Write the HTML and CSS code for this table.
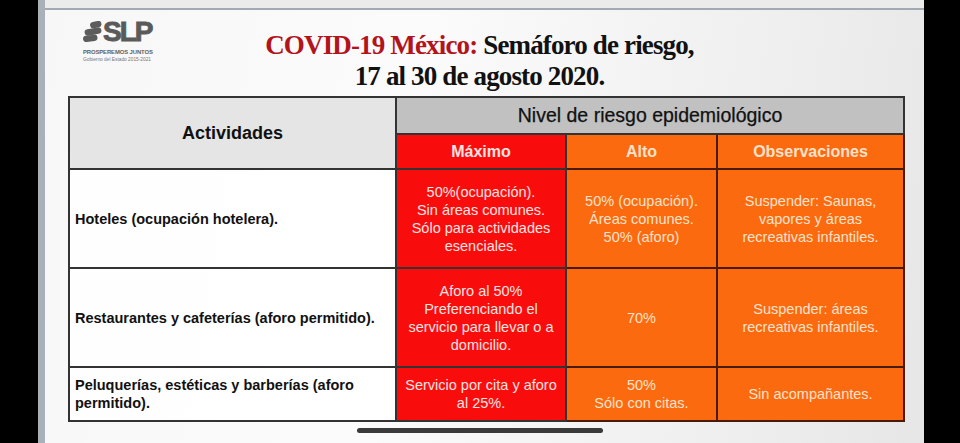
FILE: index.html
```html
<!DOCTYPE html>
<html lang="es">
<head>
<meta charset="utf-8">
<title>Semáforo de riesgo</title>
<link rel="stylesheet" href="styles.css">
</head>
<body>
<div class="screen">
  <div class="bezel"></div>
  <div class="frame">
    <div class="topstrip"></div>
    <div class="slide">
      <header class="head">
        <div class="logo">
          <div class="logo-mark">
            <svg class="pills" width="19" height="21" viewBox="0 0 19 21">
              <g fill="#5c5c5c">
                <rect x="7" y="0.5" width="11.5" height="6.3" rx="3.15" transform="rotate(-12 12.5 3.6)"/>
                <rect x="1.5" y="7.3" width="17" height="6.5" rx="3.25" transform="rotate(-10 10 10.5)"/>
                <rect x="0" y="14.2" width="14.5" height="6.3" rx="3.15" transform="rotate(-8 7.2 17.3)"/>
              </g>
            </svg>
            <span class="slp">SLP</span>
          </div>
          <div class="logo-line1">PROSPEREMOS JUNTOS</div>
          <div class="logo-line2">Gobierno del Estado 2015-2021</div>
        </div>
        <h1 class="title"><span class="red">COVID-19 México:</span> Semáforo de riesgo,<br>17 al 30 de agosto 2020.</h1>
        <div class="spacer"></div>
      </header>
      <table class="risk">
        <colgroup>
          <col class="c-act"><col class="c-max"><col class="c-alto"><col class="c-obs">
        </colgroup>
        <thead>
          <tr class="h1">
            <th rowspan="2" class="act-h">Actividades</th>
            <th colspan="3" class="nivel">Nivel de riesgo epidemiológico</th>
          </tr>
          <tr class="h2">
            <th class="max">Máximo</th>
            <th class="org">Alto</th>
            <th class="org">Observaciones</th>
          </tr>
        </thead>
        <tbody>
          <tr class="r-tall">
            <td class="act">Hoteles (ocupación hotelera).</td>
            <td class="max">50%(ocupación).<br>Sin áreas comunes.<br>Sólo para actividades<br>esenciales.</td>
            <td class="org">50% (ocupación).<br>Áreas comunes.<br>50% (aforo)</td>
            <td class="org">Suspender: Saunas,<br>vapores y áreas<br>recreativas infantiles.</td>
          </tr>
          <tr class="r-tall">
            <td class="act">Restaurantes y cafeterías (aforo permitido).</td>
            <td class="max">Aforo al 50%<br>Preferenciando el<br>servicio para llevar o a<br>domicilio.</td>
            <td class="org">70%</td>
            <td class="org">Suspender: áreas<br>recreativas infantiles.</td>
          </tr>
          <tr class="r-short">
            <td class="act">Peluquerías, estéticas y barberías (aforo permitido).</td>
            <td class="max">Servicio por cita y aforo<br>al 25%.</td>
            <td class="org">50%<br>Sólo con citas.</td>
            <td class="org">Sin acompañantes.</td>
          </tr>
        </tbody>
      </table>
    </div>
    <div class="home-indicator"></div>
  </div>
  <div class="bezel"></div>
</div>
</body>
</html>
```

FILE: styles.css
```css
html, body {
  margin: 0;
  padding: 0;
  background: #000;
}
body {
  width: 960px;
  height: 443px;
  overflow: hidden;
  font-family: "Liberation Sans", Arial, sans-serif;
}
.screen {
  display: flex;
  height: 443px;
}
.bezel {
  width: 38px;
  flex: none;
  background: #000;
}
.frame {
  position: relative;
  flex: 1;
  display: flex;
  flex-direction: column;
  border-left: 7px solid #a9b0b8;
  background: linear-gradient(100deg, #f7f7f7 0%, #fbfbfb 40%, #eeeeee 80%, #e6e6e6 100%);
}
.topstrip {
  height: 8px;
  flex: none;
  background: #ebebeb;
  border-bottom: 2px solid #a3a9b0;
}
.slide {
  flex: 1;
  display: flex;
  flex-direction: column;
  padding: 0 19px 0 23px;
}
.head {
  height: 86px;
  display: grid;
  grid-template-columns: 160px 1fr 160px;
  align-items: start;
}
.logo {
  padding: 11px 0 0 15px;
  color: #5f5f5f;
}
.logo-mark {
  display: flex;
  align-items: center;
  gap: 1px;
  height: 21px;
}
.pills {
  display: block;
}
.slp {
  font-family: "Liberation Sans", Arial, sans-serif;
  font-weight: 700;
  font-size: 28px;
  letter-spacing: -2px;
  line-height: 21px;
  color: #5a5a5a;
  -webkit-text-stroke: 0.9px #5a5a5a;
}
.logo-line1 {
  margin-top: 7px;
  font-size: 5.9px;
  font-weight: 700;
  letter-spacing: -0.1px;
  line-height: 7px;
  color: #606060;
}
.logo-line2 {
  margin-top: 1px;
  font-size: 4.8px;
  line-height: 6px;
  color: #777;
}
.title {
  margin: 0;
  padding: 20px 14px 0 0;
  text-align: center;
  font-family: "Liberation Serif", "Times New Roman", serif;
  font-weight: 700;
  font-size: 27px;
  letter-spacing: -0.85px;
  line-height: 31px;
  color: #111;
}
.red {
  color: #b3141b;
}
.risk {
  width: 835px;
  border-collapse: collapse;
  table-layout: fixed;
  border: 2px solid #333;
}
.c-act { width: 327px; }
.c-max { width: 170px; }
.c-alto { width: 151px; }
.c-obs { width: 187px; }
.risk th, .risk td {
  border: 2px solid #333;
  padding: 0 5px;
}
.h1 { height: 37px; }
.h2 { height: 35px; }
.r-tall { height: 99px; }
.r-short { height: 54px; }
.act-h {
  background: #e5e5e5;
  font-size: 18px;
  font-weight: 700;
  color: #111;
}
.nivel {
  background: #c1c1c1;
  font-size: 19.5px;
  font-weight: 400;
  color: #111;
  -webkit-text-stroke: 0.25px #111;
}
.h2 th {
  font-size: 16px;
  font-weight: 700;
}
.max {
  background: #f80d0c;
  color: #ffe4e2;
  text-align: center;
}
.org {
  background: #fb6a0e;
  color: #ffe2cc;
  text-align: center;
}
.risk tbody td.org, .risk .h2 th.org {
  border-color: #4a1a05;
}
.risk td {
  font-size: 14.5px;
  line-height: 18px;
}
.act {
  background: rgba(255, 255, 255, 0.85);
  font-weight: 700;
  color: #111;
  text-align: left;
  padding-left: 7px;
}
.home-indicator {
  position: absolute;
  left: 312px;
  top: 428px;
  width: 246px;
  height: 5px;
  border-radius: 3px;
  background: #3a3a3a;
}
```
